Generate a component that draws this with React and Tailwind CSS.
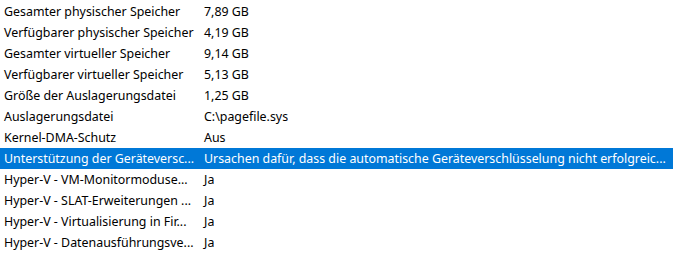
import React from 'react';

const rows = [
  ['Gesamter physischer Speicher', '7,89 GB'],
  ['Verfügbarer physischer Speicher', '4,19 GB'],
  ['Gesamter virtueller Speicher', '9,14 GB'],
  ['Verfügbarer virtueller Speicher', '5,13 GB'],
  ['Größe der Auslagerungsdatei', '1,25 GB'],
  ['Auslagerungsdatei', 'C:\\pagefile.sys'],
  ['Kernel-DMA-Schutz', 'Aus'],
  ['Unterstützung der Geräteversc...', 'Ursachen dafür, dass die automatische Geräteverschlüsselung nicht erfolgreic...', true],
  ['Hyper-V - VM-Monitormoduse...', 'Ja'],
  ['Hyper-V - SLAT-Erweiterungen ...', 'Ja'],
  ['Hyper-V - Virtualisierung in Fir...', 'Ja'],
  ['Hyper-V - Datenausführungsve...', 'Ja'],
];

export default function App() {
  return (
    <div
      className="w-[688px] h-[256px] bg-white overflow-hidden pt-px text-[12.4px] text-black"
      style={{ fontFamily: '"Noto Sans", "Open Sans", sans-serif' }}
    >
      {rows.map(([name, value, selected]) => (
        <div
          key={name}
          className={`flex h-[21px] pt-[2px] items-center w-[673px] whitespace-nowrap ${selected ? 'bg-[#0078d7] text-white' : ''}`}
        >
          <div className="w-[200px] pl-[4px] overflow-hidden">{name}</div>
          <div className="pl-[4px] overflow-hidden">{value}</div>
        </div>
      ))}
    </div>
  );
}
